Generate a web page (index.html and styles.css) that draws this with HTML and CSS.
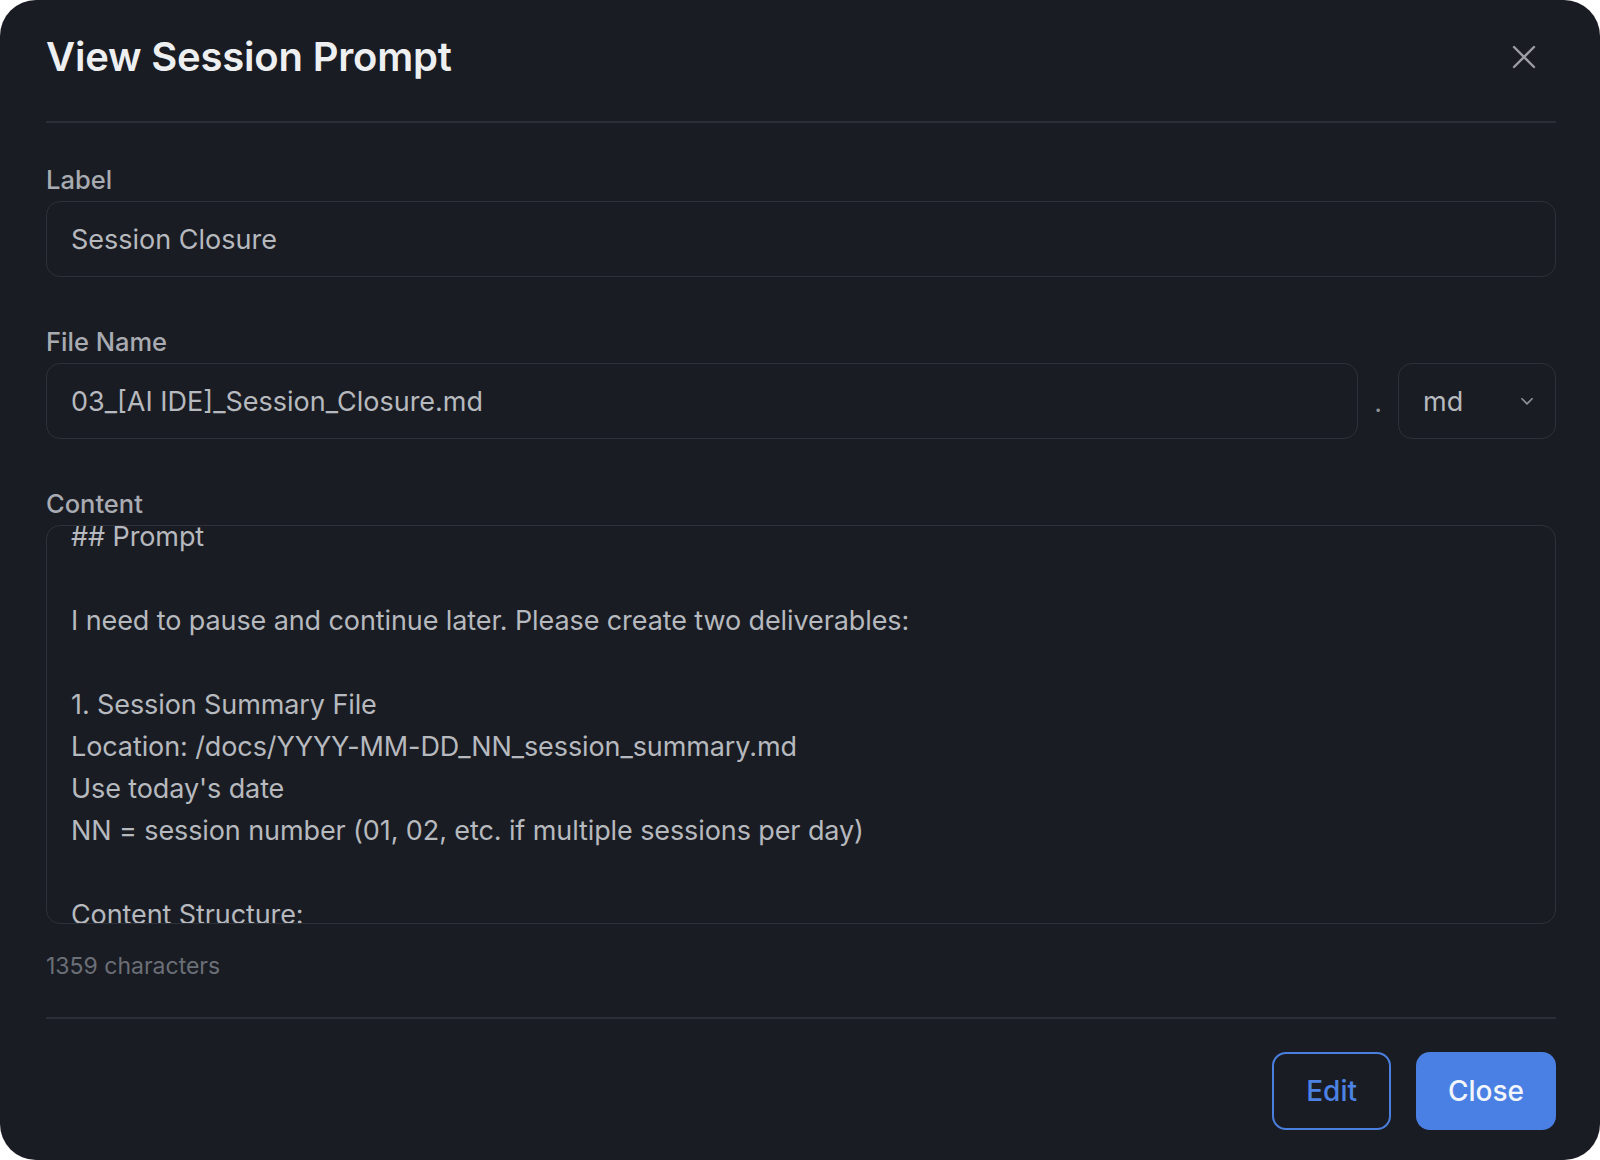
FILE: index.html
```html
<html>
	<head>
		<meta charset="utf-8">
		<meta name="viewport" content="width=device-width">
		<link rel="stylesheet" href="styles.css">
	</head>
	<body>
		<div class="modal">
			<div class="modal-header">
				<h2>View Session Prompt</h2>
				<button class="icon-close" title="Close">
					<svg width="24" height="24" viewBox="0 0 24 24" fill="none" stroke="currentColor" stroke-width="2.4" stroke-linecap="round">
						<path d="M2 2 L22 22 M22 2 L2 22"/>
					</svg>
				</button>
			</div>

			<div class="modal-body">
				<div class="field">
					<label>Label</label>
					<div class="input">Session Closure</div>
				</div>

				<div class="field">
					<label>File Name</label>
					<div class="file-row">
						<div class="input grow">03_[AI IDE]_Session_Closure.md</div>
						<span class="dot">.</span>
						<div class="input select">
							<span>md</span>
							<svg width="18" height="18" viewBox="0 0 16 16" fill="none" stroke="currentColor" stroke-width="1.5" stroke-linecap="round" stroke-linejoin="round">
								<path d="M3.5 6 L8 10.5 L12.5 6"/>
							</svg>
						</div>
					</div>
				</div>

				<div class="field">
					<label>Content</label>
					<div class="textarea">
						<div class="textarea-inner">## Prompt

I need to pause and continue later. Please create two deliverables:

1. Session Summary File
Location: /docs/YYYY-MM-DD_NN_session_summary.md
Use today's date
NN = session number (01, 02, etc. if multiple sessions per day)

Content Structure:
- What we accomplished</div>
					</div>
					<div class="hint">1359 characters</div>
				</div>
			</div>

			<div class="modal-footer">
				<button class="btn btn-outline">Edit</button>
				<button class="btn btn-primary">Close</button>
			</div>
		</div>
	</body>
</html>
```

FILE: styles.css
```css
html, body {
	margin: 0;
	background-color: #ffffff;
}

body {
	font-family: Inter, "Noto Sans", sans-serif;
}

.modal {
	width: 1600px;
	height: 1160px;
	box-sizing: border-box;
	background-color: #1a1c23;
	border-radius: 36px;
	padding: 0 44px 0 46px;
	display: flex;
	flex-direction: column;
	overflow: hidden;
}

.modal-header {
	display: flex;
	align-items: center;
	justify-content: space-between;
	padding: 29px 0 36px 0;
	border-bottom: 2px solid #2b2e36;
}

.modal-header h2 {
	margin: 0;
	font-size: 40px;
	line-height: 56px;
	font-weight: 600;
	color: #eeeff1;
	letter-spacing: -0.2px;
}

.icon-close {
	background: none;
	border: none;
	padding: 0;
	margin-right: 20px;
	color: #9b9da2;
	display: flex;
	cursor: pointer;
}

.modal-body {
	flex: 1;
	display: flex;
	flex-direction: column;
	gap: 47px;
	padding: 39px 0 30px 0;
}

.field label {
	display: block;
	font-size: 25.5px;
	line-height: 35px;
	font-weight: 500;
	color: #a8abb1;
	margin-bottom: 4px;
}

.input {
	box-sizing: border-box;
	height: 76px;
	border: 1.5px solid #2e3139;
	border-radius: 14px;
	padding: 0 24px;
	display: flex;
	align-items: center;
	font-size: 27px;
	color: #b6b9be;
}

.file-row {
	display: flex;
	align-items: center;
	gap: 16px;
}

.grow {
	flex: 1;
}

.dot {
	font-size: 27px;
	color: #8d9096;
	padding-top: 2px;
}

.select {
	width: 158px;
	justify-content: space-between;
	padding-right: 19px;
}

.select svg {
	color: #8e9197;
}

.textarea {
	box-sizing: border-box;
	height: 399px;
	border: 1.5px solid #2e3139;
	border-radius: 14px;
	overflow: hidden;
}

.textarea-inner {
	margin-top: -10px;
	padding: 0 24px;
	white-space: pre-wrap;
	font-size: 27px;
	line-height: 42px;
	letter-spacing: -0.1px;
	color: #b6b9be;
}

.hint {
	margin-top: 25px;
	font-size: 23px;
	line-height: 35px;
	color: #6b6f77;
}

.modal-footer {
	display: flex;
	justify-content: flex-end;
	gap: 25px;
	padding: 33px 0 30px 0;
	border-top: 2px solid #2b2e36;
}

.btn {
	box-sizing: border-box;
	height: 78px;
	padding: 0 32px;
	border-radius: 14px;
	font-family: Inter, "Noto Sans", sans-serif;
	font-size: 28px;
	font-weight: 500;
	cursor: pointer;
}

.btn-outline {
	background: transparent;
	border: 2px solid #4a7fde;
	color: #4c82e3;
}

.btn-primary {
	background-color: #4a80e4;
	border: none;
	color: #f2f5fa;
}
```
